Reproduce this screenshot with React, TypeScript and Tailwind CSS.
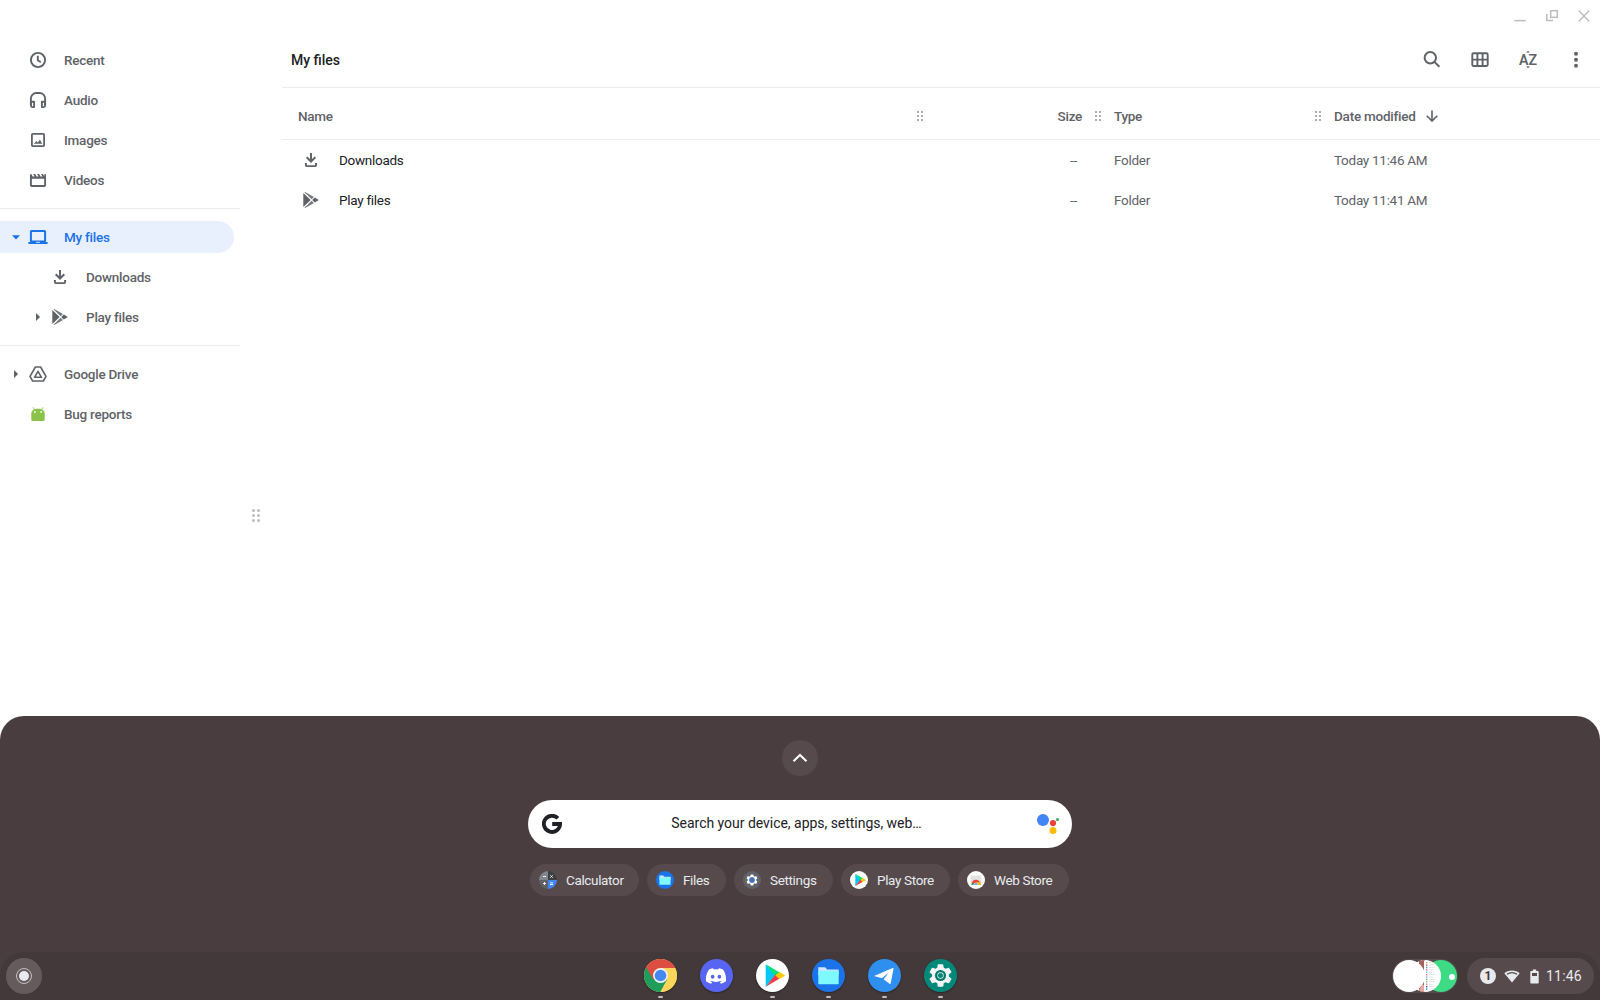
import type { ReactNode } from "react";
import { FaDiscord } from "react-icons/fa";
import { MdSettings } from "react-icons/md";

const ClockIcon = () => (
  <svg width="20" height="20" viewBox="0 0 20 20" fill="none" stroke="currentColor" strokeWidth="1.900">
    <circle cx="10" cy="10" r="7.100" />
    <path d="M9.800 5.800v4.500l3 2" />
  </svg>
);

const HeadphonesIcon = () => (
  <svg width="20" height="20" viewBox="0 0 20 20" fill="none" stroke="currentColor" strokeWidth="1.900" strokeLinejoin="round">
    <path d="M2.900 15.500V8.500a5.500 5.500 0 0 1 5.500-5.500h3.200a5.500 5.500 0 0 1 5.500 5.500v7" />
    <path d="M2.900 11.800h3.200v5.300H4.400a1.500 1.500 0 0 1-1.500-1.500zM17.100 11.800h-3.200v5.300h1.700a1.500 1.500 0 0 0 1.500-1.500z" />
  </svg>
);

const ImageIcon = () => (
  <svg width="20" height="20" viewBox="0 0 20 20">
    <rect x="3.900" y="3.900" width="12.200" height="12.200" rx="0.800" fill="none" stroke="currentColor" strokeWidth="1.800" />
    <path d="M6 13.700l2.200-2.800 1.600 1.700 2.100-2.900 2.400 4z" fill="currentColor" />
  </svg>
);

const MovieIcon = () => (
  <svg width="20" height="20" viewBox="0 0 20 20">
    <path d="M2.900 5v10.200c0 .5.4.8.8.8h12.600c.5 0 .8-.3.8-.8V8" fill="none" stroke="currentColor" strokeWidth="1.900" />
    <path d="M2 5.200C2 4.400 2.600 4 3.300 4L4.700 6.500H6.600L5.200 4H7.200L8.600 6.500H10.500L9.100 4H11.100L12.500 6.500H14.400L13 4H15L16.400 6.500V4H17C17.600 4 18 4.400 18 5V8.700H2z" fill="currentColor" />
  </svg>
);

const LaptopIcon = () => (
  <svg width="20" height="20" viewBox="0 0 20 20">
    <rect x="2.900" y="3.900" width="14.200" height="10.600" rx="0.700" fill="none" stroke="currentColor" strokeWidth="2" />
    <path d="M0.300 15h19.400v1c0 .6-.4 1-1 1H1.300c-.6 0-1-.4-1-1z" fill="currentColor" />
    <path d="M8 15.300h4" stroke="#e8f0fe" strokeWidth="0.900" />
  </svg>
);

const DownloadIcon = () => (
  <svg width="20" height="20" viewBox="0 0 20 20" fill="none" stroke="currentColor" strokeWidth="1.950">
    <path d="M10 3v8.200M5.700 7.200L10 11.500l4.300-4.300M4.900 13v2.300c0 .5.3.8.8.8h8.600c.5 0 .8-.3.8-.8V13" />
  </svg>
);

const PlayFilesIcon = () => (
  <svg width="20" height="20" viewBox="0 0 20 20" fill="currentColor">
    <path d="M2.300 2.900v14.200L9.800 10z" />
    <path d="M3.300 2.300L10.500 9.300 13 7.100 4.600 2.200zM3.300 17.700L10.500 10.700 13 12.900 4.600 17.800z" opacity="0.850" />
    <path d="M13.800 7.500L11.200 10l2.600 2.500 3.300-1.900c.6-.3.6-.9 0-1.200z" />
    <path d="M5 4.400l5.200 5.600L5 15.600" fill="none" stroke="#fff" strokeWidth="0.700" />
  </svg>
);

const DriveIcon = () => (
  <svg width="20" height="20" viewBox="0 0 20 20" fill="none" stroke="currentColor" strokeLinejoin="round">
    <path d="M7.400 3h5.200L18 12.300 15.400 17H4.600L2 12.300z" strokeWidth="1.600" />
    <path d="M10 7.300l3.500 6h-7z" strokeWidth="1.600" />
  </svg>
);

const AndroidIcon = () => (
  <svg width="20" height="20" viewBox="0 0 20 20">
    <path d="M5 3.300l1.700 2.600M15 3.300l-1.700 2.600" stroke="#8bc34a" strokeWidth="0.900" />
    <path d="M3.300 11V9.500C3.300 6.600 6 4.800 10 4.800s6.700 1.800 6.700 4.700V11z" fill="#8bc34a" />
    <path d="M3.300 10.500h13.400v5.700c0 .5-.3.8-.8.8H4.100c-.5 0-.8-.3-.8-.8z" fill="#8bc34a" />
    <circle cx="6.900" cy="7.900" r="0.900" fill="#fff" />
    <circle cx="13.100" cy="7.900" r="0.900" fill="#fff" />
  </svg>
);

const CaretRight = () => (
  <svg width="5" height="8" viewBox="0.5 0 5 8" fill="currentColor"><path d="M0.500 0v8L4.600 4z" /></svg>
);
const CaretDown = () => (
  <svg width="8" height="5" viewBox="0 0 8 5" fill="currentColor"><path d="M0 0.300h8L4 4.500z" /></svg>
);

const Dots = ({ big = false }: { big?: boolean }) =>
  big ? (
    <svg width="10" height="15" viewBox="0 0 10 15" fill="#b8bcc4">
      {[2.5, 7.5, 12.5].map((y) => (
        <g key={y}><circle cx="2.500" cy={y} r="1.500" /><circle cx="7.500" cy={y} r="1.500" /></g>
      ))}
    </svg>
  ) : (
    <svg width="6" height="10" viewBox="0 0 6 10" fill="#a9adb1">
      {[0, 4, 8].map((y) => (
        <g key={y}><rect x="0" y={y} width="2" height="2" /><rect x="4" y={y} width="2" height="2" /></g>
      ))}
    </svg>
  );

type RowProps = { icon: ReactNode; label: string; caret?: ReactNode; nested?: boolean; active?: boolean };

function SideRow({ icon, label, caret, nested, active }: RowProps) {
  return (
    <div className="flex h-10 items-center pr-1.5">
      <div
        className={`flex h-8 w-[234px] items-center rounded-r-full ${nested ? "pl-[22px]" : ""} ${
          active ? "bg-[#e8f0fe] text-[#1a73e8]" : "text-[#5f6368]"
        }`}
      >
        <span className="flex w-7 justify-center pl-1">{caret}</span>
        {icon}
        <span className="ml-4 pt-px text-[13.5px] font-medium tracking-[-0.24px]">{label}</span>
      </div>
    </div>
  );
}

const SideDivider = () => <div className="my-2 h-px w-60 bg-[#ebecee]" />;

function Sidebar() {
  return (
    <aside className="flex w-60 flex-col pt-10">
      <SideRow icon={<ClockIcon />} label="Recent" />
      <SideRow icon={<HeadphonesIcon />} label="Audio" />
      <SideRow icon={<ImageIcon />} label="Images" />
      <SideRow icon={<MovieIcon />} label="Videos" />
      <SideDivider />
      <SideRow icon={<LaptopIcon />} label="My files" caret={<CaretDown />} active />
      <SideRow icon={<DownloadIcon />} label="Downloads" nested />
      <SideRow icon={<PlayFilesIcon />} label="Play files" caret={<CaretRight />} nested />
      <SideDivider />
      <SideRow icon={<DriveIcon />} label="Google Drive" caret={<CaretRight />} />
      <SideRow icon={<AndroidIcon />} label="Bug reports" />
    </aside>
  );
}

function WindowControls() {
  return (
    <div className="flex h-8 justify-end gap-3 pr-1.5 text-[#bdbdbd]">
      <svg width="20" height="32" viewBox="0 0 20 32"><path d="M4.300 20.600h11.400" stroke="currentColor" strokeWidth="1.500" /></svg>
      <svg width="20" height="32" viewBox="0 0 20 32" fill="none" stroke="currentColor" strokeWidth="1.500">
        <rect x="8.700" y="10.700" width="6.600" height="6.600" />
        <path d="M4.800 14v6.500h6.400" />
      </svg>
      <svg width="20" height="32" viewBox="0 0 20 32"><path d="M5 10.800l10 10.400M15 10.800L5 21.200" stroke="currentColor" strokeWidth="1.500" /></svg>
    </div>
  );
}

function Toolbar() {
  return (
    <div className="flex h-14 items-center justify-between border-b border-[#ebecee] pl-[9px] pr-3.5">
      <h1 className="pt-0.5 text-[14px] font-medium text-[#202124]">My files</h1>
      <div className="flex gap-7 text-[#5f6368]">
        <svg width="20" height="20" viewBox="0 0 20 20" fill="none" stroke="currentColor" strokeWidth="2">
          <circle cx="8.300" cy="7.800" r="5.700" /><path d="M12.400 11.900l5 4.900" />
        </svg>
        <svg width="20" height="20" viewBox="0 0 20 20" fill="none" stroke="currentColor" strokeWidth="1.900">
          <rect x="2.300" y="3.300" width="15.400" height="12.700" rx="1.200" />
          <path d="M7.400 3.300v12.700M12.600 3.300v12.700M2.300 9.600h15.400" />
        </svg>
        <svg width="20" height="20" viewBox="0 0 20 20" fill="currentColor">
          <text x="1" y="14.700" fontSize="14.500" fontWeight="600" textLength="18" lengthAdjust="spacingAndGlyphs">AZ</text>
          <path d="M8.200 2.600L10 0.700l1.800 1.900zM8.200 16.300l1.800 1.900 1.800-1.900z" />
        </svg>
        <svg width="20" height="20" viewBox="0 0 20 20" fill="currentColor">
          <circle cx="10" cy="3.700" r="2" /><circle cx="10" cy="9.700" r="2" /><circle cx="10" cy="15.700" r="2" />
        </svg>
      </div>
    </div>
  );
}

const columns = "grid grid-cols-[641px_178px_220px_1fr] items-center";

const files = [
  { name: "Downloads", icon: <DownloadIcon />, date: "Today 11:46 AM" },
  { name: "Play files", icon: <PlayFilesIcon />, date: "Today 11:41 AM" },
];

function FileList() {
  return (
    <div className="text-[13.5px] tracking-[-0.28px] text-[#5f6368]">
      <div className={`${columns} h-[52px] border-b border-[#ebecee] pt-[5px] font-medium`}>
        <div className="flex items-center justify-between pl-4"><span>Name</span><Dots /></div>
        <div className="flex items-center justify-end gap-[13px]"><span>Size</span><Dots /></div>
        <div className="flex items-center justify-between pl-[13px]"><span>Type</span><Dots /></div>
        <div className="flex items-center gap-2.5 pl-[13px]">
          <span className="tracking-[-0.23px]">Date modified</span>
          <svg width="12" height="12" viewBox="0 0 12 12" fill="none" stroke="currentColor" strokeWidth="1.600">
            <path d="M6 0.500v10.300M0.700 5.800L6 11l5.300-5.200" />
          </svg>
        </div>
      </div>
      {files.map((file) => (
        <div key={file.name} className={`${columns} h-10`}>
          <div className="flex items-center pl-[19px]">
            {file.icon}
            <span className="ml-[18px] pt-px text-[#202124]">{file.name}</span>
          </div>
          <span className="pr-6 pt-px text-right">--</span>
          <span className="pl-[13px] pt-px">Folder</span>
          <span className="pl-[13px] pt-px">{file.date}</span>
        </div>
      ))}
    </div>
  );
}

const PlayStoreIcon = ({ size }: { size: number }) => (
  <svg width={size} height={size} viewBox="0 0 34 34">
    <circle cx="17" cy="17" r="17" fill="#fff" />
    <path d="M10 5.500v23L21 17z" fill="#00c8f8" />
    <path d="M10 5.500L24.500 13.800 20 18z" fill="#00e07a" />
    <path d="M10 28.500L24.500 20.200 20 16z" fill="#f93a4b" />
    <path d="M24 13.400L20 17l4 3.600 5.600-3.100c.5-.3.5-.7 0-1z" fill="#ffc800" />
  </svg>
);

const FilesIcon = ({ size }: { size: number }) => (
  <svg width={size} height={size} viewBox="0 0 34 34">
    <circle cx="17" cy="17" r="17" fill="#1a73e8" />
    <path d="M6.500 8.500h7l2.200 2.300h11.800v6h-21z" fill="#d2e3fc" />
    <rect x="6.500" y="12" width="21" height="14" rx="0.800" fill="#7df9ff" />
  </svg>
);

const CalculatorIcon = () => (
  <svg width="18" height="18" viewBox="0 0 18 18">
    <path d="M9 0A9 9 0 0 0 0 9h9z" fill="#80868b" />
    <path d="M9 0a9 9 0 0 1 9 9H9z" fill="#3c4043" />
    <path d="M0 9a9 9 0 0 0 9 9V9z" fill="#5f6368" />
    <path d="M18 9a9 9 0 0 1-9 9V9z" fill="#4285f4" />
    <path d="M4 5.500h3M11.300 4.300l2.400 2.400M13.700 4.300l-2.400 2.400M4 12.500h3M5.500 11v3M11 11.900h3M11 13.500h3" stroke="#fff" strokeWidth="0.900" />
  </svg>
);

const SettingsChipIcon = () => (
  <span className="flex size-[18px] items-center justify-center rounded-full bg-[#5f6368]">
    <svg width="14" height="14" viewBox="0 0 24 24">
      <circle cx="12" cy="12" r="5.500" fill="#3367d6" />
      <MdSettings size={24} color="#fff" />
      <circle cx="12" cy="12" r="5" fill="#4285f4" />
      <circle cx="12" cy="12" r="3" fill="#5f6368" />
    </svg>
  </span>
);

const WebStoreIcon = () => (
  <svg width="18" height="18" viewBox="0 0 18 18">
    <circle cx="9" cy="9" r="9" fill="#fff" />
    <rect x="3.700" y="4.500" width="10.600" height="9.500" rx="0.600" fill="#e0e2e4" />
    <path d="M4.200 14a4.900 4.900 0 0 1 9.600 0h-2.500L9 11.300 6.700 14z" fill="#34a853" />
    <path d="M4.600 11.800a4.900 4.900 0 0 1 8.800-.4H9L6.400 13z" fill="#ea4335" />
    <path d="M13.300 11.200a5 5 0 0 1 .6 2.800H10V11.200z" fill="#fbbc04" />
    <path d="M6.900 14a2.100 2.100 0 0 1 4.200 0z" fill="#4285f4" stroke="#fff" strokeWidth="0.500" />
  </svg>
);

const chips = [
  { label: "Calculator", icon: <CalculatorIcon />, width: "w-[109px]" },
  { label: "Files", icon: <FilesIcon size={18} />, width: "w-[79px]" },
  { label: "Settings", icon: <SettingsChipIcon />, width: "w-[99px]" },
  { label: "Play Store", icon: <PlayStoreIcon size={18} />, width: "w-[109px]" },
  { label: "Web Store", icon: <WebStoreIcon />, width: "w-[111px]" },
];

function Launcher() {
  return (
    <section className="flex flex-1 flex-col items-center pt-6">
      <button className="flex size-9 items-center justify-center rounded-full bg-[#564a4c]">
        <svg width="16" height="10" viewBox="0 0 16 10" fill="none" stroke="#fff" strokeWidth="2">
          <path d="M1.500 8.300L8 2l6.500 6.300" />
        </svg>
      </button>
      <div className="mt-6 flex h-12 w-[544px] items-center rounded-full bg-white pl-3.5 pr-3">
        <svg width="20" height="20" viewBox="0 0 20 20" fill="none" stroke="#202124" strokeWidth="3.800">
          <path d="M15.900 4.300A8.100 8.100 0 1 0 18.100 10H10.200" />
        </svg>
        <span className="flex-1 pb-px pr-[5px] text-center text-[14px] tracking-[-0.03px] text-[#202124]">
          Search your device, apps, settings, web…
        </span>
        <svg width="24" height="24" viewBox="0 0 24 24">
          <circle cx="7" cy="8" r="6" fill="#4285f4" />
          <circle cx="17" cy="11" r="3.100" fill="#ea4335" />
          <circle cx="17" cy="18.500" r="3.500" fill="#fbbc04" />
          <circle cx="21.500" cy="7.500" r="1.500" fill="#34a853" />
        </svg>
      </div>
      <div className="mt-4 flex gap-2 pr-px">
        {chips.map((chip) => (
          <div key={chip.label} className={`flex h-8 items-center gap-[9px] rounded-full bg-[#564a4c] pl-[9px] ${chip.width}`}>
            {chip.icon}
            <span className="whitespace-nowrap pt-px text-[13.5px] tracking-[-0.35px] text-[#e8eaed]">{chip.label}</span>
          </div>
        ))}
      </div>
    </section>
  );
}

const ChromeIcon = () => (
  <svg width="33" height="33" viewBox="0 0 34 34">
    <circle cx="17" cy="17" r="17" fill="#fdd55b" />
    <path d="M17 17L2.300 8.500A17 17 0 0 0 17 34l7.400-12.800z" fill="#1f9d5b" />
    <path d="M17 17V9.300h15.200A17 17 0 0 0 2.300 8.500l7.400 12.800z" fill="#dc4e41" />
    <path d="M17 34A17 17 0 0 0 32.200 9.300H17V17l6.700 4z" fill="#fdd55b" />
    <circle cx="17" cy="17" r="7.700" fill="#f1f1f1" />
    <circle cx="17" cy="17" r="6" fill="#4688f1" />
  </svg>
);

const DiscordIcon = () => (
  <span className="flex size-[33px] items-center justify-center rounded-full bg-[#5865f2]">
    <FaDiscord size={22} color="#fff" />
  </span>
);

const TelegramIcon = () => (
  <svg width="33" height="33" viewBox="0 0 34 34">
    <circle cx="17" cy="17" r="17" fill="#2f8fee" />
    <path d="M6.200 17.500L25.400 9.300c.6-.2 1 .1.900.8L23.400 25c-.2.700-.7.900-1.300.5l-7.500-5.600-4.600-1.400z" fill="#fff" />
    <path d="M14.300 19.800L21 14.200l-5 6.800-.4 4.200z" fill="#2f8fee" />
  </svg>
);

const SettingsIcon = () => (
  <svg width="33" height="33" viewBox="0 0 34 34">
    <circle cx="17" cy="17" r="17" fill="#00897b" />
    <g transform="translate(2.540 2.540) scale(1.205)">
      <MdSettings size={24} color="#f5f5f5" />
    </g>
    <circle cx="17" cy="17" r="5.700" fill="#00796b" />
    <circle cx="17" cy="17" r="3.300" fill="#f5f5f5" />
    <circle cx="17" cy="17" r="2.600" fill="#00897b" />
  </svg>
);

const shelfApps = [
  { id: "chrome", icon: <ChromeIcon />, running: true },
  { id: "discord", icon: <DiscordIcon />, running: false },
  { id: "play", icon: <PlayStoreIcon size={33} />, running: true },
  { id: "files", icon: <FilesIcon size={33} />, running: true },
  { id: "telegram", icon: <TelegramIcon />, running: true },
  { id: "settings", icon: <SettingsIcon />, running: true },
];

function HoldingSpace() {
  return (
    <div className="flex h-[34px] w-[66px] items-center rounded-full bg-[#564a4c] p-px">
      <svg width="64" height="32" viewBox="0 0 64 32">
        <circle cx="48" cy="16" r="16" fill="#3ddc84" />
        <circle cx="59" cy="17" r="3" fill="#fff" />
        <circle cx="32" cy="16" r="16" fill="#fff" />
        <path d="M26 1.200A16 16 0 0 1 32 0v32a16 16 0 0 1-6-1.200z" fill="#a4605c" />
        <path d="M29 25h3v7l-6-1.200z" fill="#e9a9a2" />
        {["#f4a261", "#e76f51", "#3b9ae1", "#d05ce3", "#4dd0e1", "#f06292", "#64b5f6", "#4caf50", "#90a4ae", "#ff8a80", "#5e35b1", "#2196f3"].map((c, i) => (
          <g key={c}>
            <rect x="33" y={2 + i * 2.4} width="1.400" height="1.400" fill={c} />
            <rect x="36" y={2.3 + i * 2.4} width={4 + (i % 3)} height="0.600" fill="#d5d5d5" />
          </g>
        ))}
        <path d="M31 0.500h1v31h-1z" fill="#fff" />
        <circle cx="16" cy="16" r="16" fill="#fff" />
      </svg>
    </div>
  );
}

function StatusTray() {
  return (
    <div className="flex h-9 w-[127px] items-center rounded-full bg-[#564a4c] pl-[13px] text-[#e8eaed]">
      <span className="flex size-4 items-center justify-center rounded-full bg-[#e8eaed] text-[12px] font-bold text-[#43383a]">1</span>
      <svg className="ml-2" width="16" height="13" viewBox="0 0 16 13">
        <path d="M8 12.500L0.300 3.200C2.300 1.400 5 .5 8 .5s5.700.9 7.700 2.700z" fill="currentColor" />
        <path d="M2.900 4.300a9 9 0 0 1 10.200 0" fill="none" stroke="#564a4c" strokeWidth="1.300" />
      </svg>
      <svg className="ml-[9.5px]" width="9" height="15" viewBox="0 0 9 15">
        <path d="M2.800.5h3.400V2H8c.4 0 .7.300.7.700v11.100c0 .4-.3.700-.7.700H1c-.4 0-.7-.3-.7-.7V2.700C.3 2.300.6 2 1 2h1.800z" fill="currentColor" />
        <path d="M2 4h5v3H2z" fill="#564a4c" />
      </svg>
      <span className="ml-[7.5px] text-[14px] tracking-[0.2px]">11:46</span>
    </div>
  );
}

function Shelf() {
  return (
    <footer className="grid h-12 grid-cols-[1fr_auto_1fr] items-center rounded-t-3xl bg-[#43383a] px-1.5">
      <button className="flex size-9 items-center justify-center rounded-full bg-[#655b5d]">
        <span className="flex size-4 items-center justify-center rounded-full border border-[#c5c1c2]">
          <span className="size-2.5 rounded-full bg-[#e8eaed]" />
        </span>
      </button>
      <div className="flex gap-[23px]">
        {shelfApps.map((app) => (
          <div key={app.id} className="flex h-12 flex-col items-center pt-[7px]">
            <span className="rounded-full shadow-[0_1px_2px_rgba(0,0,0,0.35)]">{app.icon}</span>
            {app.running && <span className="mt-1 h-0.5 w-[5px] rounded-full bg-[#c0bbbc]" />}
          </div>
        ))}
      </div>
      <div className="flex items-center justify-end gap-[9px]">
        <HoldingSpace />
        <StatusTray />
      </div>
    </footer>
  );
}

export default function App() {
  return (
    <div className="flex h-[1000px] w-[1600px] flex-col overflow-hidden bg-white font-[Roboto,sans-serif]">
      <div className="flex h-[716px]">
        <Sidebar />
        <div className="flex w-[42px] items-start pl-[11px] pt-[508px]"><Dots big /></div>
        <main className="flex flex-1 flex-col">
          <WindowControls />
          <Toolbar />
          <FileList />
        </main>
      </div>
      <div className="flex h-[284px] flex-col rounded-t-3xl bg-[#4a3d3f]">
        <Launcher />
        <Shelf />
      </div>
    </div>
  );
}
